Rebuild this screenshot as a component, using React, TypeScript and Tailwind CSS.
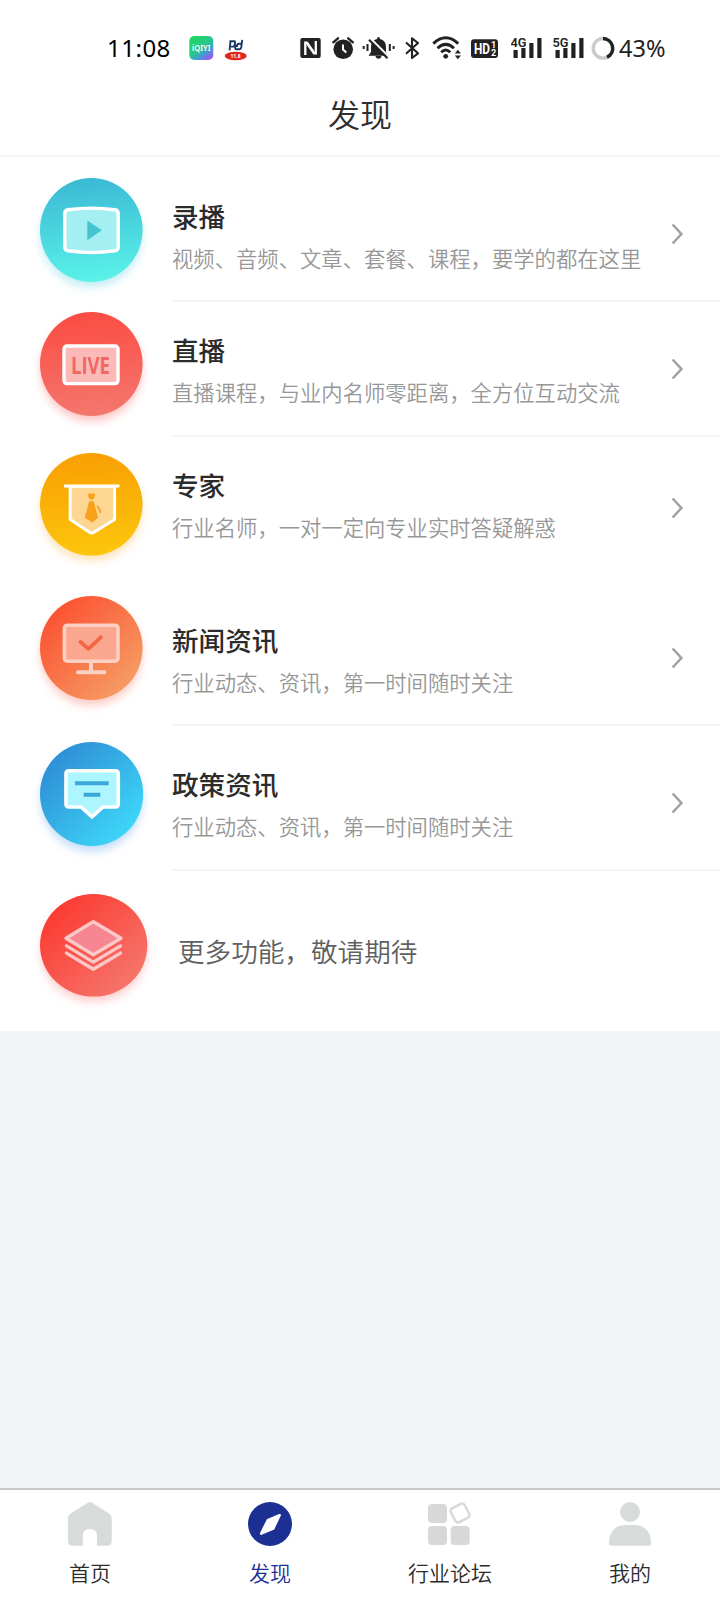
import type { ReactNode } from 'react'

interface Feature {
  title: string
  desc: string
  icon: ReactNode
  row: string
  iconPad: string
  textPad: string
  arrowPad: string
  divider: boolean
}

interface BadgeProps {
  id: string
  from: string
  to: string
  shadow: string
  diagonal?: boolean
  rx?: number
  ry?: number
  children: ReactNode
}

function Badge({ id, from, to, shadow, diagonal, rx = 51.3, ry = 52, children }: BadgeProps) {
  return (
    <svg width={rx * 2} height={ry * 2} viewBox={`0 0 ${rx * 2} ${ry * 2}`} className="overflow-visible">
      <defs>
        <linearGradient id={id} x1={diagonal ? '0.15' : '0.45'} y1={diagonal ? '0.15' : '0'} x2={diagonal ? '0.85' : '0.55'} y2={diagonal ? '0.85' : '1'}>
          <stop offset="0" stopColor={from} />
          <stop offset="1" stopColor={to} />
        </linearGradient>
        <filter id={`${id}-blur`} x="-30%" y="-30%" width="160%" height="160%">
          <feGaussianBlur stdDeviation="5" />
        </filter>
      </defs>
      <ellipse cx={rx} cy={ry + 6} rx={rx - 1} ry={ry - 1} fill={shadow} opacity="0.55" filter={`url(#${id}-blur)`} />
      <ellipse cx={rx} cy={ry} rx={rx} ry={ry} fill={`url(#${id})`} />
      {children}
    </svg>
  )
}

const VideoIcon = (
  <Badge id="video" from="#3bb9d4" to="#5af3e9" shadow="#8edcec">
    <path d="M28 31.8 Q51.5 28.4 75 31.8 Q78.2 32.3 78.2 35.5 V69 Q78.2 72.2 75 72.8 Q51.5 76.4 28 72.8 Q24.8 72.2 24.8 69 V35.5 Q24.8 32.3 28 31.8Z" fill="#a3eff1" stroke="#fff" strokeWidth="3.4" />
    <path d="M47.3 42.5 L61.8 52.3 L47.3 62.3Z" fill="#45c3cf" />
  </Badge>
)

const LiveIcon = (
  <Badge id="live" from="#fb4c43" to="#f4776d" shadow="#fb8f8f">
    <rect x="24" y="34" width="54" height="37.6" rx="3" fill="#fbbab8" stroke="#fff" strokeWidth="3.4" />
    <text x="31" y="61.6" textLength="39" lengthAdjust="spacingAndGlyphs" className="font-['Open_Sans'] text-[23px] font-bold" fill="#ef6863">LIVE</text>
  </Badge>
)

const ExpertIcon = (
  <Badge id="expert" from="#f99f04" to="#fcc60c" shadow="#fbc97a" ry={51.3}>
    <path d="M30.2 33.5 V66.5 L49.5 79.3 Q51.7 80.8 54 79.3 L74.6 66.5 V33.5Z" fill="#fdd791" stroke="#fff" strokeWidth="3" />
    <path d="M24 33 H79.5" stroke="#fff" strokeWidth="2.8" />
    <path d="M48 40.5 H54.9 L54.5 44.5 L52.8 46.5 H50.2 L48.4 44.5Z M49.2 48.3 H53.7 L58 64.7 L52 69.8 L44.8 64.5Z" fill="#f9a11b" />
    <path d="M57 53 Q60 56 60.5 60" fill="none" stroke="#f9a11b" strokeWidth="1.8" />
  </Badge>
)

const NewsIcon = (
  <Badge id="news" from="#fb5433" to="#f69a62" shadow="#fb9a8a" diagonal>
    <rect x="24.4" y="29.2" width="53.6" height="36" rx="3" fill="#fba78f" stroke="#fdd0c4" strokeWidth="3.6" />
    <path d="M51 66.5 V75.5 M38 76.3 H64.5" fill="none" stroke="#fdd0c4" strokeWidth="4" strokeLinecap="round" />
    <path d="M40.5 46 L48.4 52.8 L61 41.2" fill="none" stroke="#f26645" strokeWidth="3.8" strokeLinecap="round" strokeLinejoin="round" />
  </Badge>
)

const PolicyIcon = (
  <Badge id="policy" from="#2f90d6" to="#3dd5f8" shadow="#8bbcf2" diagonal rx={51.6}>
    <path d="M29 28.7 H75.3 Q78.3 28.7 78.3 31.7 V62 Q78.3 65 75.3 65 H63 L52 74.8 L41 65 H29 Q26 65 26 62 V31.7 Q26 28.7 29 28.7Z" fill="#adf6ff" stroke="#fff" strokeWidth="3.6" />
    <path d="M35 41.3 H68.7 M43.7 52.7 H60.3" stroke="#3aa6d9" strokeWidth="4" />
  </Badge>
)

const MoreIcon = (
  <Badge id="more" from="#fb3c34" to="#f6746a" shadow="#fba3a0" diagonal rx={53.7} ry={51.3}>
    <path d="M53.3 27.6 L81 44.2 L53.3 60.7 L26 44.2Z" fill="#f78693" stroke="#fdc9c8" strokeWidth="3.4" strokeLinejoin="round" />
    <path d="M26.5 51.9 L53.3 68.1 L80.5 51.9 M26.5 59.1 L53.3 75.3 L80.5 59.1" fill="none" stroke="#fdc9c8" strokeWidth="3.4" strokeLinecap="round" strokeLinejoin="round" />
  </Badge>
)

const features: Feature[] = [
  { title: '录播', desc: '视频、音频、文章、套餐、课程，要学的都在这里', icon: VideoIcon, row: 'h-[145px]', iconPad: 'pt-[20.5px]', textPad: 'pt-[37.5px]', arrowPad: 'pt-[66px]', divider: true },
  { title: '直播', desc: '直播课程，与业内名师零距离，全方位互动交流', icon: LiveIcon, row: 'h-[135px]', iconPad: 'pt-[10px]', textPad: 'pt-[27px]', arrowPad: 'pt-[56px]', divider: true },
  { title: '专家', desc: '行业名师，一对一定向专业实时答疑解惑', icon: ExpertIcon, row: 'h-[143px]', iconPad: 'pt-[15.5px]', textPad: 'pt-[27px]', arrowPad: 'pt-[60px]', divider: false },
  { title: '新闻资讯', desc: '行业动态、资讯，第一时间随时关注', icon: NewsIcon, row: 'h-[146px]', iconPad: 'pt-[16.3px]', textPad: 'pt-[38.5px]', arrowPad: 'pt-[67px]', divider: true },
  { title: '政策资讯', desc: '行业动态、资讯，第一时间随时关注', icon: PolicyIcon, row: 'h-[145px]', iconPad: 'pt-[16px]', textPad: 'pt-[37px]', arrowPad: 'pt-[66px]', divider: true },
]

const tabs = [
  {
    label: '首页',
    active: false,
    icon: (
      <path d="M19.5 1 Q22 -0.8 24.5 1 L41 11.6 Q43.7 13.5 43.7 16.5 V39 Q43.7 43.8 39 43.8 H29 V34 Q29 27 21.9 27 Q14.8 27 14.8 34 V43.8 H4.8 Q0 43.8 0 39 V16.5 Q0 13.5 2.7 11.6Z" fill="#d7dbda" />
    ),
  },
  {
    label: '发现',
    active: true,
    icon: (
      <>
        <circle cx="22" cy="22" r="22" fill="#1c2f92" />
        <path d="M31.6 13.2 L19.8 18.2 L13.2 31.6 L25.2 26.6Z" fill="#fff" stroke="#fff" strokeWidth="2.6" strokeLinejoin="round" />
      </>
    ),
  },
  {
    label: '行业论坛',
    active: false,
    icon: (
      <>
        <g fill="#d8d8d8">
          <rect x="0" y="2" width="19" height="19" rx="4" />
          <rect x="0" y="24" width="19" height="19" rx="4" />
          <rect x="22.7" y="24" width="19" height="19" rx="4" />
        </g>
        <rect x="24.2" y="3.2" width="15.6" height="15.6" rx="3" fill="#fff" stroke="#d8d8d8" strokeWidth="2.4" transform="rotate(-28 32 11)" />
      </>
    ),
  },
  {
    label: '我的',
    active: false,
    icon: (
      <g fill="#d7dbda">
        <circle cx="22" cy="10" r="10" />
        <path d="M17 23 H27 Q35 23 39.5 29 Q43 34 43 41 Q43 43.8 40.5 43.8 H3.5 Q1 43.8 1 41 Q1 34 4.5 29 Q9 23 17 23Z" />
      </g>
    ),
  },
]

function Signal({ label }: { label: string }) {
  return (
    <svg width="32" height="28" viewBox="0 0 32 28" fill="#222" className="shrink-0">
      <text x="-0.5" y="12.8" textLength="16" lengthAdjust="spacingAndGlyphs" className="font-['Roboto'] text-[13.5px] font-semibold">{label}</text>
      <rect x="2.5" y="16" width="4.2" height="8" rx="0.6" />
      <rect x="10.3" y="14" width="4.2" height="10" rx="0.6" />
      <rect x="18.3" y="9" width="4.2" height="15" rx="0.6" />
      <rect x="26.3" y="4" width="4.2" height="20" rx="0.6" />
    </svg>
  )
}

function StatusBar() {
  return (
    <div className="flex h-[80px] items-center pt-4 pl-[107px]">
      <span className="w-[64px] font-['Noto_Sans'] text-[24px] leading-7 tracking-[0.5px] text-black">11:08</span>

      <svg width="25" height="28" viewBox="189 34 25 28" className="ml-[18px] shrink-0">
        <defs>
          <linearGradient id="iqiyi" x1="0.2" y1="0.1" x2="0.9" y2="1">
            <stop offset="0" stopColor="#1fd662" />
            <stop offset="0.45" stopColor="#2bc492" />
            <stop offset="0.65" stopColor="#3f9fd0" />
            <stop offset="1" stopColor="#a84cf5" />
          </linearGradient>
        </defs>
        <rect x="189.3" y="36" width="24" height="24" rx="5" fill="url(#iqiyi)" />
        <text x="192" y="51.2" textLength="18.5" lengthAdjust="spacingAndGlyphs" className="font-['Noto_Sans'] text-[8.5px] font-semibold" fill="#fff">iQIYI</text>
      </svg>

      <svg width="23" height="28" viewBox="224 34 23 28" className="ml-[10px] shrink-0">
        <path d="M229.6 50.3 L230.4 41.3 H234.2 Q235.4 41.3 235 43 L234.6 45.2 Q234.3 46.6 232.8 46.6 H231 M235.6 44.5 L235.2 47.6 Q235 49.2 236.5 49.2 H239.6 Q241 49.2 241.2 47.6 L242.2 39.8 M241.3 43.7 H238.8 Q237.4 43.7 237.2 45.2 L237 46.8" fill="none" stroke="#1b3768" strokeWidth="1.9" />
        <ellipse cx="235.7" cy="56" rx="11" ry="4.2" fill="#e3241b" />
        <text x="230.5" y="58.3" textLength="10" lengthAdjust="spacingAndGlyphs" className="font-['Noto_Sans'] text-[6px] font-bold" fill="#fff">11.8</text>
      </svg>

      {/* NFC */}
      <svg width="21" height="28" viewBox="300 34 21 28" className="ml-[53px] shrink-0">
        <rect x="300.3" y="38" width="20.4" height="20" rx="2" fill="#222" />
        <path d="M305.3 55 V42.6 H307 L313.5 52 M315.8 41 V53.4 H314 L307.5 44" fill="none" stroke="#fff" strokeWidth="2.3" />
      </svg>

      {/* alarm */}
      <svg width="22" height="28" viewBox="331.5 34 22 28" className="ml-[11px] shrink-0">
        <circle cx="342.7" cy="49.3" r="9.8" fill="#222" />
        <path d="M332.8 42.3 L337.5 38.3 M352.4 42.3 L347.7 38.3" stroke="#222" strokeWidth="2.4" strokeLinecap="round" />
        <path d="M342.5 44.5 V49.5 L345.8 52.6" fill="none" stroke="#fff" strokeWidth="2" />
      </svg>

      {/* muted bell */}
      <svg width="33" height="28" viewBox="362 34 33 28" className="ml-[8px] shrink-0">
        <path d="M378.5 37 Q380 37 380 39 Q386 40.5 386 47 V52 L388.5 55.8 H368.5 L371 52 V47 Q371 40.5 377 39 Q377 37 378.5 37Z M375.5 56 H381.5 Q381 58.8 378.5 58.8 Q376 58.8 375.5 56Z" fill="#222" />
        <path d="M370.3 38.3 L389.3 57.3" stroke="#fff" strokeWidth="2.2" />
        <path d="M369 39.8 L387.5 58.2" stroke="#222" strokeWidth="2.2" />
        <path d="M363.7 46 V49 M367.5 44 V51 M389.8 44 V51 M393.6 46 V49" stroke="#222" strokeWidth="2" />
      </svg>

      {/* bluetooth */}
      <svg width="14" height="28" viewBox="405 34 14 28" className="ml-[10px] shrink-0">
        <path d="M406 42.5 L418 53.3 L412 58 V38.3 L418 43 L406 53.8" fill="none" stroke="#222" strokeWidth="2.1" strokeLinejoin="round" />
      </svg>

      {/* wifi */}
      <svg width="30" height="28" viewBox="432 34 30 28" className="ml-[13px] shrink-0">
        <path d="M433.3 43.6 Q445.7 31.8 458.2 43.6 M437.5 48.3 Q445.7 40.4 454 48.3 M441.2 52.2 Q445.7 48 450.3 52.2" fill="none" stroke="#222" strokeWidth="2.9" />
        <circle cx="445.7" cy="56.3" r="2.4" fill="#222" />
        <path d="M457.9 49.8 L461 53.6 H454.8Z M457.9 59.3 L461 55.5 H454.8Z" fill="#222" />
      </svg>

      {/* dual-sim HD */}
      <svg width="27" height="28" viewBox="471 34 27 28" className="ml-[9px] shrink-0">
        <rect x="471" y="39.3" width="27" height="18.7" rx="3" fill="#222" />
        <text x="474" y="53.8" textLength="16" lengthAdjust="spacingAndGlyphs" className="font-['Roboto'] text-[14.5px] font-bold" fill="#fff">HD</text>
        <text x="491" y="48" className="font-['Roboto'] text-[9px] font-bold" fill="#fff">1</text>
        <text x="491" y="56.4" className="font-['Roboto'] text-[9px] font-bold" fill="#fff">2</text>
      </svg>

      <div className="ml-[13px] flex shrink-0 gap-[10px]">
        <Signal label="4G" />
        <Signal label="5G" />
      </div>

      <svg width="24" height="28" viewBox="590.5 34 24 28" className="ml-[6px] shrink-0">
        <circle cx="602.5" cy="48.3" r="9.8" fill="none" stroke="#cbcbcb" strokeWidth="3.4" />
        <path d="M602.5 38.5 A9.8 9.8 0 0 1 606.5 57.2" fill="none" stroke="#222" strokeWidth="3.4" />
      </svg>

      <span className="ml-[4px] font-['Noto_Sans'] text-[23.5px] leading-7 text-[#222]">43%</span>
    </div>
  )
}

function Arrow() {
  return (
    <svg width="14" height="22" viewBox="0 0 14 22" className="shrink-0">
      <path d="M1.6 1.5 L10.4 11 L1.6 20.5" fill="none" stroke="#a0a0a0" strokeWidth="2.5" />
    </svg>
  )
}

function FeatureRow({ item }: { item: Feature }) {
  return (
    <li className={`flex ${item.row}`}>
      <div className={`w-[132px] shrink-0 ${item.iconPad}`}>{item.icon}</div>
      <div className={`flex flex-1 border-[#f5f5f5] ${item.divider ? 'border-b-2' : ''}`}>
        <div className={`w-[498px] shrink-0 whitespace-nowrap ${item.textPad}`}>
          <h2 className="text-[26.6px] leading-[42px] font-medium text-[#2b2b2b]">{item.title}</h2>
          <p className="text-[21.33px] leading-[41px] font-[350] text-[#979797]">{item.desc}</p>
        </div>
        <div className={`ml-[1px] ${item.arrowPad}`}>
          <Arrow />
        </div>
      </div>
    </li>
  )
}

export default function App() {
  return (
    <div className="flex h-[1600px] w-[720px] flex-col overflow-hidden bg-[#f3f4f6] font-['Noto_Sans_CJK_SC',sans-serif]">
      <header className="border-b-2 border-[#f6f6f6] bg-white">
        <StatusBar />
        <h1 className="h-[75px] text-center text-[32px] leading-[67px] font-[350] text-[#2e2e2e]">发现</h1>
      </header>

      <ul className="bg-white pl-10">
        {features.map((item) => (
          <FeatureRow key={item.title} item={item} />
        ))}
        <li className="flex h-[160px] pt-[23px]">
          <div className="w-[138px] shrink-0">{MoreIcon}</div>
          <p className="pt-[35.5px] text-[26.6px] leading-[42px] font-[350] text-[#606060]">更多功能，敬请期待</p>
        </li>
      </ul>

      <nav className="mt-auto grid h-[112px] grid-cols-4 border-t-2 border-[#c6c9cc] bg-white pt-3">
        {tabs.map((tab) => (
          <div key={tab.label} className="flex flex-col items-center">
            <svg width="44" height="44" viewBox="0 0 44 44" className="shrink-0 overflow-visible">
              {tab.icon}
            </svg>
            <span className={`mt-[10px] text-[21px] leading-8 font-[350] ${tab.active ? 'text-[#1c2f92]' : 'text-[#2b2b2b]'}`}>
              {tab.label}
            </span>
          </div>
        ))}
      </nav>
    </div>
  )
}
